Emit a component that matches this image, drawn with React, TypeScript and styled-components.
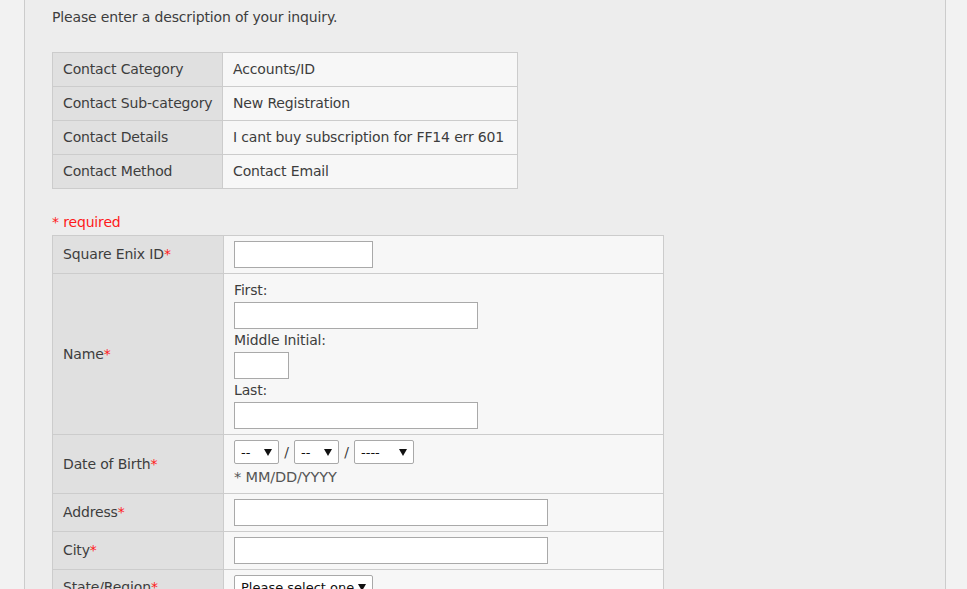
import React from 'react';
import styled, { createGlobalStyle } from 'styled-components';

const GlobalStyle = createGlobalStyle`
  html, body {
    margin: 0;
    padding: 0;
    background: #f2f2f2;
  }
  body {
    font-family: "DejaVu Sans", Verdana, sans-serif;
    font-size: 14px;
    color: #3d3d3d;
    letter-spacing: -0.15px;
  }
`;

const Page = styled.div`
  margin-left: 24px;
  width: 922px;
  min-height: 700px;
  background: #ededed;
  border-left: 1px solid #cccccc;
  border-right: 1px solid #cccccc;
  padding: 8px 27px 40px 27px;
  box-sizing: border-box;
`;

const Intro = styled.p`
  margin: 0 0 26px 0;
  line-height: 18px;
`;

const SummaryTable = styled.table`
  border-collapse: collapse;
  table-layout: fixed;
  width: 466px;
  margin-bottom: 24px;
`;

const Label = styled.th`
  background: #e0e0e0;
  border: 1px solid #cccccc;
  font-weight: normal;
  text-align: left;
  padding: 8px 10px;
  line-height: 17px;
  vertical-align: middle;
  white-space: nowrap;
`;

const Value = styled.td`
  background: #f7f7f7;
  border: 1px solid #cccccc;
  padding: 8px 10px;
  line-height: 17px;
  vertical-align: middle;
  white-space: nowrap;
`;

const RequiredNote = styled.div`
  color: #ff1a1a;
  line-height: 18px;
  margin-bottom: 4px;
`;

const FormTable = styled.table`
  border-collapse: collapse;
  table-layout: fixed;
  width: 612px;
`;

const FieldLabel = styled(Label)`
  padding: 5px 10px;
`;

const FieldCell = styled(Value)`
  padding: 5px 10px;
`;

const Star = styled.span`
  color: #ff1a1a;
`;

const Input = styled.input<{ $w: number }>`
  display: block;
  box-sizing: border-box;
  width: ${p => p.$w}px;
  height: 27px;
  margin: 0;
  border: 1px solid #a9a9a9;
  background: #ffffff;
  font-family: inherit;
  font-size: 13px;
  padding: 2px 4px;
  outline: none;
`;

const SubLabel = styled.div`
  line-height: 23px;
`;

const DateRow = styled.div`
  display: flex;
  align-items: center;
  height: 24px;
`;

const Slash = styled.span`
  width: 15px;
  text-align: center;
`;

const SelectWrap = styled.span<{ $w: number }>`
  position: relative;
  display: inline-block;
  width: ${p => p.$w}px;
  height: 24px;

  &::after {
    content: '';
    position: absolute;
    right: 7px;
    top: 9px;
    border-left: 4px solid transparent;
    border-right: 4px solid transparent;
    border-top: 7px solid #111;
    pointer-events: none;
  }
`;

const Select = styled.select`
  appearance: none;
  -webkit-appearance: none;
  box-sizing: border-box;
  width: 100%;
  height: 100%;
  margin: 0;
  border: 1px solid #a9a9a9;
  border-radius: 2px;
  background: #ffffff;
  color: #111;
  font-family: inherit;
  font-size: 13px;
  letter-spacing: 0;
  padding: 0 6px;
  outline: none;
`;

const DateHint = styled.div`
  line-height: 22px;
  margin-top: 2px;
  font-size: 14.5px;
  color: #555;
`;

const summary = [
  ['Contact Category', 'Accounts/ID'],
  ['Contact Sub-category', 'New Registration'],
  ['Contact Details', 'I cant buy subscription for FF14 err 601'],
  ['Contact Method', 'Contact Email'],
];

function DateSelect({ width, blank }: { width: number; blank: string }) {
  return (
    <SelectWrap $w={width}>
      <Select defaultValue="">
        <option value="">{blank}</option>
      </Select>
    </SelectWrap>
  );
}

export default function App() {
  return (
    <>
      <GlobalStyle />
      <Page>
        <Intro>Please enter a description of your inquiry.</Intro>

        <SummaryTable>
          <colgroup>
            <col style={{ width: 170 }} />
            <col />
          </colgroup>
          <tbody>
            {summary.map(([label, value]) => (
              <tr key={label}>
                <Label>{label}</Label>
                <Value>{value}</Value>
              </tr>
            ))}
          </tbody>
        </SummaryTable>

        <RequiredNote>* required</RequiredNote>

        <FormTable>
          <colgroup>
            <col style={{ width: 171 }} />
            <col />
          </colgroup>
          <tbody>
            <tr>
              <FieldLabel>Square Enix ID<Star>*</Star></FieldLabel>
              <FieldCell><Input $w={139} /></FieldCell>
            </tr>
            <tr>
              <FieldLabel>Name<Star>*</Star></FieldLabel>
              <FieldCell>
                <SubLabel>First:</SubLabel>
                <Input $w={244} />
                <SubLabel>Middle Initial:</SubLabel>
                <Input $w={55} />
                <SubLabel>Last:</SubLabel>
                <Input $w={244} />
              </FieldCell>
            </tr>
            <tr>
              <FieldLabel>Date of Birth<Star>*</Star></FieldLabel>
              <FieldCell>
                <DateRow>
                  <DateSelect width={45} blank="--" />
                  <Slash>/</Slash>
                  <DateSelect width={45} blank="--" />
                  <Slash>/</Slash>
                  <DateSelect width={60} blank="----" />
                </DateRow>
                <DateHint>* MM/DD/YYYY</DateHint>
              </FieldCell>
            </tr>
            <tr>
              <FieldLabel>Address<Star>*</Star></FieldLabel>
              <FieldCell><Input $w={314} /></FieldCell>
            </tr>
            <tr>
              <FieldLabel>City<Star>*</Star></FieldLabel>
              <FieldCell><Input $w={314} /></FieldCell>
            </tr>
            <tr>
              <FieldLabel>State/Region<Star>*</Star></FieldLabel>
              <FieldCell>
                <SelectWrap $w={139}>
                  <Select defaultValue="">
                    <option value="">Please select one</option>
                  </Select>
                </SelectWrap>
              </FieldCell>
            </tr>
          </tbody>
        </FormTable>
      </Page>
    </>
  );
}
